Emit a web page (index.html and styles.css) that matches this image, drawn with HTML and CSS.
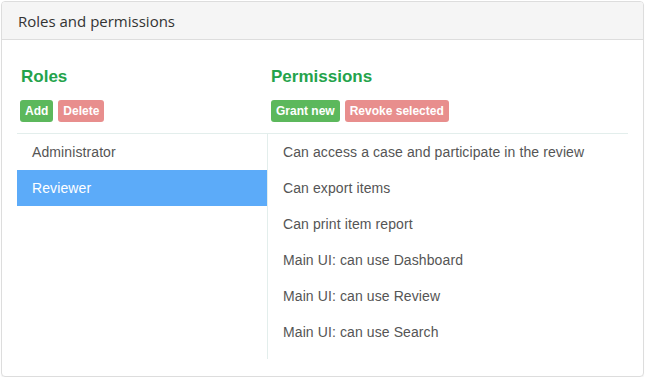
FILE: index.html
```html
<!DOCTYPE html>
<html lang="en">
<head>
  <meta charset="UTF-8">
  <title>Roles and permissions</title>
  <link rel="stylesheet" href="styles.css">
</head>
<body>
  <div class="panel">
    <div class="panel-heading">Roles and permissions</div>
    <div class="panel-body">
      <div class="toolbar">
        <div class="col-roles">
          <h3>Roles</h3>
          <div class="buttons">
            <button class="btn btn-success">Add</button>
            <button class="btn btn-danger">Delete</button>
          </div>
        </div>
        <div class="col-perms">
          <h3>Permissions</h3>
          <div class="buttons">
            <button class="btn btn-success">Grant new</button>
            <button class="btn btn-danger">Revoke selected</button>
          </div>
        </div>
      </div>
      <div class="lists">
        <ul class="list roles">
          <li>Administrator</li>
          <li class="active">Reviewer</li>
        </ul>
        <ul class="list perms">
          <li>Can access a case and participate in the review</li>
          <li>Can export items</li>
          <li>Can print item report</li>
          <li>Main UI: can use Dashboard</li>
          <li>Main UI: can use Review</li>
          <li>Main UI: can use Search</li>
        </ul>
      </div>
    </div>
  </div>
</body>
</html>
```

FILE: styles.css
```css
body {
  margin: 0;
  padding: 1px;
  font-family: "Liberation Sans", Arial, sans-serif;
  font-size: 14px;
  color: #555;
  background: #fff;
}
.panel {
  width: 643px;
  height: 376px;
  box-sizing: border-box;
  border: 1px solid #ddd;
  border-radius: 4px;
  box-shadow: 0 1px 1px rgba(0, 0, 0, 0.06);
  overflow: hidden;
}
.panel-heading {
  height: 38px;
  box-sizing: border-box;
  padding: 8px 15px 0 16px;
  background: #f5f5f5;
  border-bottom: 1px solid #ddd;
  font-family: "Open Sans", "Noto Sans", sans-serif;
  font-size: 15px;
  line-height: 22px;
  color: #333;
}
.panel-body {
  padding: 28px 15px 16px;
}
.toolbar {
  display: flex;
  border-bottom: 1px solid #e3eeec;
  padding-bottom: 11px;
}
.col-roles {
  width: 250px;
  padding-left: 3px;
  box-sizing: border-box;
}
.col-perms {
  padding-left: 4px;
}
.col-roles h3 {
  margin-left: 1px;
}
h3 {
  margin: 0 0 14px;
  font-size: 17px;
  line-height: 18px;
  font-weight: bold;
  color: #24a34b;
}
.buttons {
  display: flex;
  gap: 5px;
}
.btn {
  height: 22px;
  padding: 0 5px;
  border: none;
  border-radius: 3px;
  font-family: "Liberation Sans", Arial, sans-serif;
  font-size: 12px;
  font-weight: bold;
  color: #fff;
  cursor: pointer;
}
.btn-success {
  background: #5cb85c;
}
.btn-danger {
  background: #e88e8d;
}
.lists {
  display: flex;
}
.list {
  margin: 0;
  padding: 0;
  list-style: none;
}
.list li {
  height: 36px;
  line-height: 36px;
  padding-left: 15px;
  letter-spacing: 0.1px;
}
.roles {
  width: 250px;
}
.roles li.active {
  background: #5cabf9;
  color: #fff;
}
.perms {
  flex: 1;
  border-left: 1px solid #e3eeec;
  padding-bottom: 9px;
}
```
